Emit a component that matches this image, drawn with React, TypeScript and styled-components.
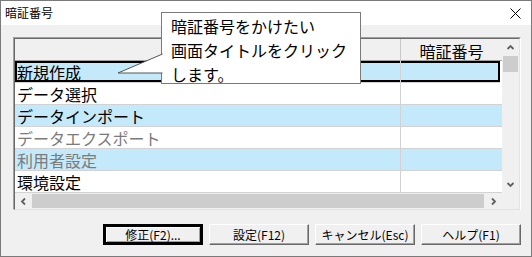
import React from 'react'
import styled, { createGlobalStyle } from 'styled-components'

const GlobalStyle = createGlobalStyle`
  html, body {
    margin: 0;
    padding: 0;
    background: #ffffff;
  }
  body {
    font-family: "Noto Sans CJK JP", "Noto Sans", sans-serif;
  }
`

const Window = styled.div`
  position: relative;
  width: 532px;
  height: 257px;
  box-sizing: border-box;
  border: 1px solid #7a7a7a;
  background: #f0f0f0;
  display: flex;
  flex-direction: column;
  overflow: hidden;
`

const TitleBar = styled.div`
  height: 24px;
  background: #ffffff;
  display: flex;
  align-items: center;
  justify-content: space-between;
  padding: 0 10px 0 4px;
  flex-shrink: 0;
`

const TitleText = styled.span`
  font-size: 12px;
  color: #000;
  line-height: 1;
`

const Body = styled.div`
  flex: 1;
  display: flex;
  flex-direction: column;
  padding: 12px 10px 0 12px;
`

const ListBox = styled.div`
  box-sizing: border-box;
  height: 173px;
  border-style: solid;
  border-width: 1px;
  border-color: #a0a0a0 #ffffff #ffffff #a0a0a0;
  display: flex;
  flex-direction: column;
`

const ListInner = styled.div`
  flex: 1;
  border-style: solid;
  border-width: 1px;
  border-color: #696969 #e3e3e3 #e3e3e3 #696969;
  background: #ffffff;
  display: grid;
  grid-template-columns: 1fr 17px;
  grid-template-rows: 1fr 16px;
`

const Table = styled.div`
  display: flex;
  flex-direction: column;
  overflow: hidden;
`

const HeaderRow = styled.div`
  height: 21px;
  display: grid;
  grid-template-columns: 386px 1fr;
  background: #f0f0f0;
  border-bottom: 1px solid #a0a0a0;
  flex-shrink: 0;
`

const HeaderCell = styled.div<{ $last?: boolean }>`
  display: flex;
  align-items: center;
  justify-content: center;
  font-size: 16px;
  color: #000;
  border-right: ${(p) => (p.$last ? 'none' : '1px solid #c8c8c8')};
`

const Row = styled.div<{ $alt?: boolean; $focus?: boolean }>`
  position: relative;
  height: 21px;
  display: grid;
  grid-template-columns: 386px 1fr;
  background: ${(p) => (p.$alt ? '#c4e9fb' : '#ffffff')};
  border-bottom: 1px solid #d2d2d2;
  flex-shrink: 0;
  box-shadow: ${(p) => (p.$focus ? 'inset 0 0 0 2px #000' : 'none')};
  margin-right: ${(p) => (p.$focus ? '2px' : '0')};
`

const Cell = styled.div<{ $disabled?: boolean; $last?: boolean }>`
  display: flex;
  align-items: center;
  padding-left: 2px;
  font-size: 16px;
  line-height: 1;
  white-space: nowrap;
  color: ${(p) => (p.$disabled ? '#7b7b7b' : '#000')};
  border-right: ${(p) => (p.$last ? 'none' : '1px solid #d2d2d2')};
`

const VScroll = styled.div`
  background: #f0f0f0;
  display: flex;
  flex-direction: column;
`

const HScroll = styled.div`
  background: #f0f0f0;
  display: flex;
`

const Corner = styled.div`
  background: #f0f0f0;
`

const ArrowBox = styled.div<{ $w?: number; $h?: number }>`
  width: ${(p) => (p.$w ? `${p.$w}px` : 'auto')};
  height: ${(p) => (p.$h ? `${p.$h}px` : 'auto')};
  display: flex;
  align-items: center;
  justify-content: center;
  flex-shrink: 0;
`

const VThumb = styled.div`
  margin: 0 1px;
  height: 16px;
  background: #cdcdcd;
`

const VTrack = styled.div`
  flex: 1;
`

const HThumb = styled.div`
  flex: 1;
  margin: 1px 0;
  background: #cdcdcd;
`

const ButtonRow = styled.div`
  display: flex;
  justify-content: flex-end;
  gap: 6px;
  margin-top: 14px;
`

const Button = styled.div<{ $default?: boolean }>`
  box-sizing: border-box;
  width: 100px;
  height: 21px;
  display: flex;
  align-items: center;
  justify-content: center;
  font-size: 12px;
  color: #000;
  background: #f0f0f0;
  border-style: solid;
  border-width: ${(p) => (p.$default ? '3px' : '1px')};
  border-color: ${(p) => (p.$default ? '#000' : '#ffffff #696969 #696969 #ffffff')};
  box-shadow: ${(p) =>
    p.$default
      ? 'inset 1px 1px 0 #ffffff, inset -1px -1px 0 #a0a0a0'
      : 'inset -1px -1px 0 #a0a0a0'};
`

const Callout = styled.div`
  position: absolute;
  left: 160px;
  top: 11px;
  width: 200px;
  height: 72px;
  box-sizing: border-box;
  background: #ffffff;
  border: 1px solid #7a7a7a;
  padding: 1px 0 0 9px;
  font-size: 16px;
  line-height: 24px;
  color: #000;
  z-index: 2;
`

const Pointer = styled.svg`
  position: absolute;
  left: 116px;
  top: 52px;
  z-index: 3;
`

const Chevron = ({ dir }: { dir: 'up' | 'down' | 'left' | 'right' }) => {
  const rot = { up: 0, right: 90, down: 180, left: 270 }[dir]
  return (
    <svg width="9" height="9" viewBox="0 0 9 9" style={{ transform: `rotate(${rot}deg)` }}>
      <path d="M1.5 6 L4.5 3 L7.5 6" fill="none" stroke="#606060" strokeWidth="1.8" />
    </svg>
  )
}

const rows = [
  { name: '新規作成', alt: true, focus: true },
  { name: 'データ選択' },
  { name: 'データインポート', alt: true },
  { name: 'データエクスポート', disabled: true },
  { name: '利用者設定', alt: true, disabled: true },
  { name: '環境設定' },
]

export default function App() {
  return (
    <>
      <GlobalStyle />
      <Window>
        <TitleBar>
          <TitleText>暗証番号</TitleText>
          <svg width="11" height="11" viewBox="0 0 11 11">
            <path d="M0.5 0.5 L10.5 10.5 M10.5 0.5 L0.5 10.5" stroke="#000" strokeWidth="1" />
          </svg>
        </TitleBar>
        <Body>
          <ListBox>
            <ListInner>
              <Table>
                <HeaderRow>
                  <HeaderCell />
                  <HeaderCell $last>暗証番号</HeaderCell>
                </HeaderRow>
                {rows.map((r) => (
                  <Row key={r.name} $alt={r.alt} $focus={r.focus}>
                    <Cell $disabled={r.disabled}>{r.name}</Cell>
                    <Cell $last />
                  </Row>
                ))}
              </Table>
              <VScroll>
                <ArrowBox $h={17}>
                  <Chevron dir="up" />
                </ArrowBox>
                <VThumb />
                <VTrack />
                <ArrowBox $h={17}>
                  <Chevron dir="down" />
                </ArrowBox>
              </VScroll>
              <HScroll>
                <ArrowBox $w={17}>
                  <Chevron dir="left" />
                </ArrowBox>
                <HThumb />
                <ArrowBox $w={18}>
                  <Chevron dir="right" />
                </ArrowBox>
              </HScroll>
              <Corner />
            </ListInner>
          </ListBox>
          <ButtonRow>
            <Button $default>修正(F2)...</Button>
            <Button>設定(F12)</Button>
            <Button>キャンセル(Esc)</Button>
            <Button>ヘルプ(F1)</Button>
          </ButtonRow>
        </Body>
        <Callout>
          暗証番号をかけたい
          <br />
          画面タイトルをクリック
          <br />
          します。
        </Callout>
        <Pointer width="47" height="22" viewBox="0 0 47 22">
          <path d="M46 1 L1 20 L46 20 Z" fill="#ffffff" />
          <path d="M45.5 1 L1 20 L45.5 20" fill="none" stroke="#555" strokeWidth="1" />
        </Pointer>
      </Window>
    </>
  )
}
